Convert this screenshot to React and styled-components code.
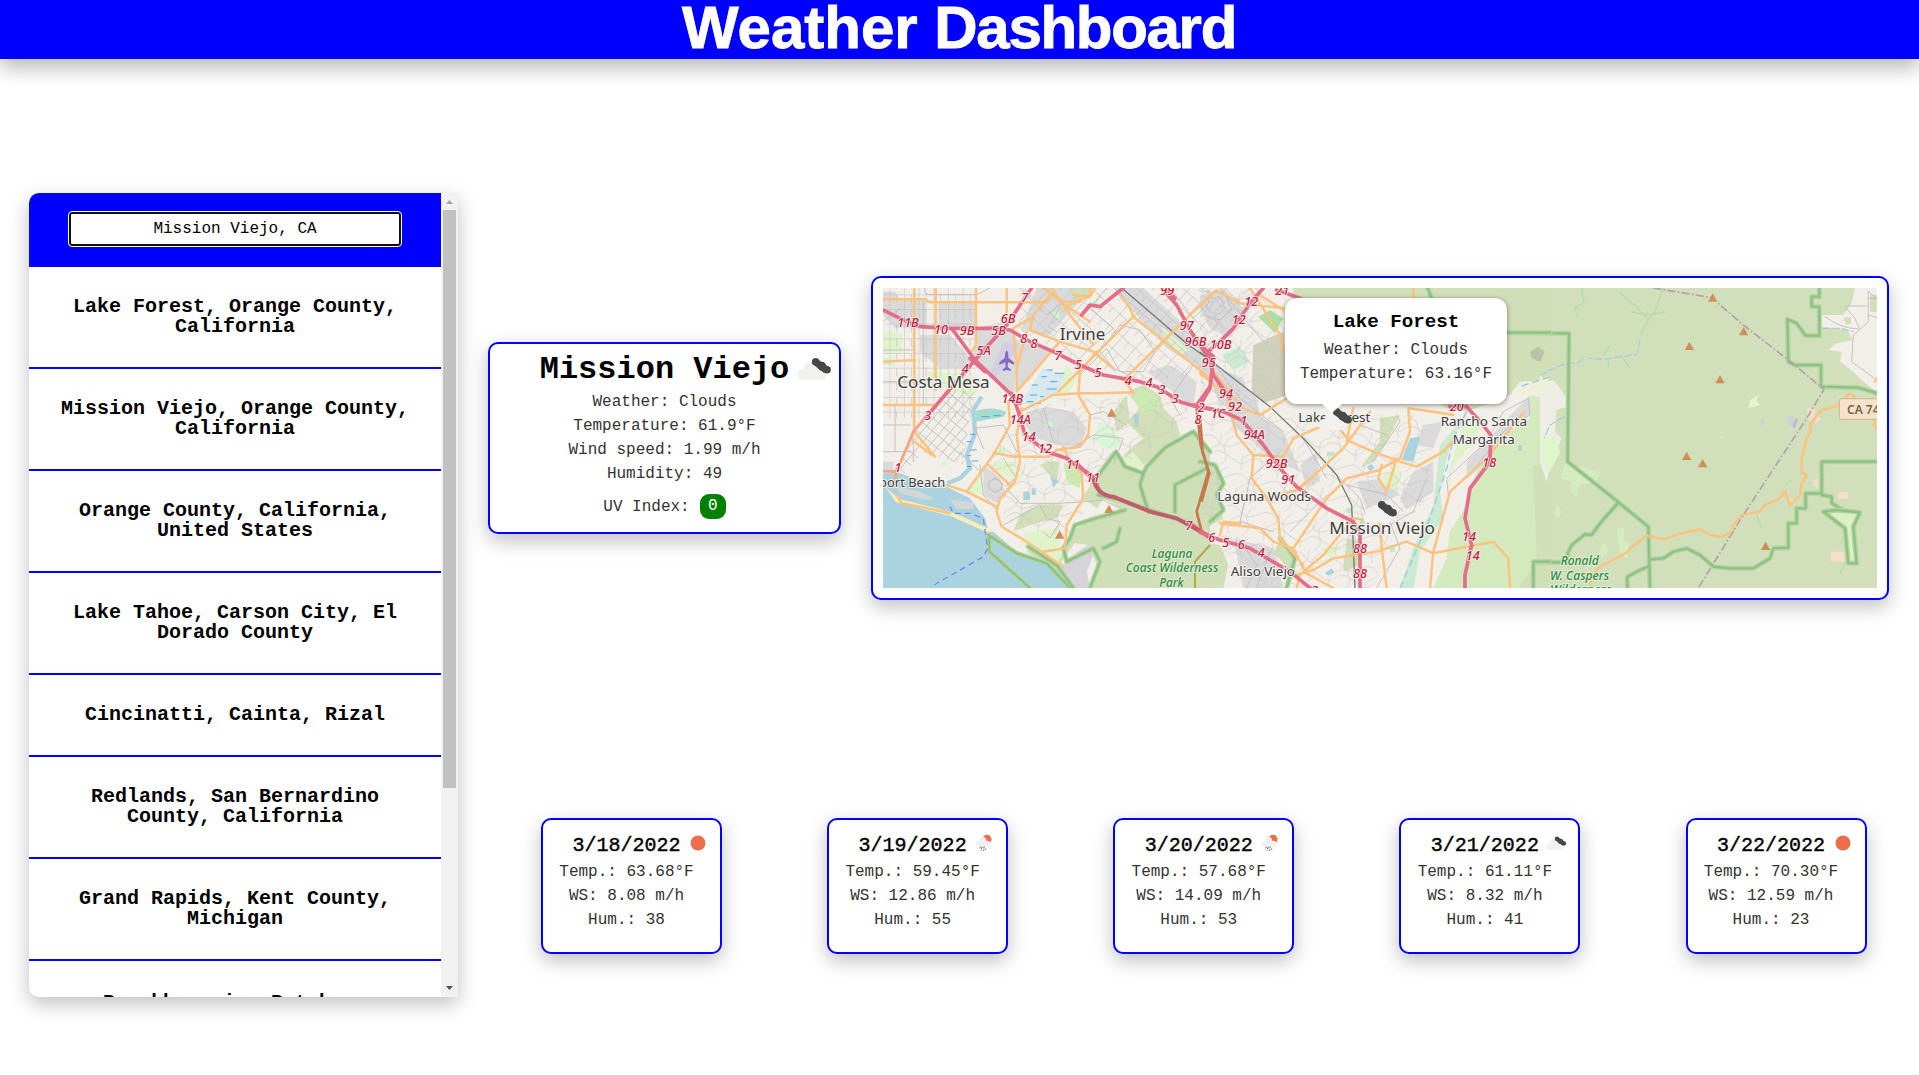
import React from "react";
import styled, { createGlobalStyle } from "styled-components";

const mono = `"Liberation Mono", "Courier New", monospace`;
const cardShadow = "0 7px 20px rgba(0, 0, 0, 0.25)";

const GlobalStyle = createGlobalStyle`
  * { box-sizing: border-box; }
  html, body { margin: 0; padding: 0; background: #fff; overflow: hidden; }
  body { font-family: ${mono}; color: #000; }
`;

const Page = styled.div`
  width: 100vw;
  height: 100vh;
  display: flex;
  flex-direction: column;
  overflow: hidden;
`;

const Header = styled.header`
  height: 59px;
  flex: none;
  background: #00f;
  box-shadow: 0 9px 20px rgba(0, 0, 0, 0.28);
  display: flex;
  justify-content: center;
`;

const Title = styled.h1`
  margin: 0;
  padding-right: 1px;
  font: 700 60px/56px "Liberation Sans", Arial, sans-serif;
  color: #fff;
  -webkit-text-stroke: 0.9px #fff;
  white-space: nowrap;
`;

const TightWord = styled.span`
  letter-spacing: -1.3px;
`;

const Body = styled.main`
  flex: 1;
  display: flex;
  align-items: flex-start;
  gap: 30px;
  padding: 134px 30px 0 29px;
`;

const Sidebar = styled.aside`
  width: 429px;
  height: 804px;
  flex: none;
  display: flex;
  overflow: hidden;
  border-radius: 10px 0 0 10px;
  background: #fff;
  box-shadow: ${cardShadow};
`;

const List = styled.div`
  flex: 1;
  overflow: hidden;
`;

const SearchBar = styled.div`
  height: 74px;
  background: #00f;
  padding: 19px 40px 0 40px;
`;

const SearchInput = styled.input`
  display: block;
  width: 332px;
  height: 34px;
  margin: 0 auto;
  border: 2px solid #101010;
  border-radius: 3px;
  outline: 1px solid #fff;
  background: #fff;
  padding: 0;
  text-align: center;
  font: 400 16px ${mono};
  color: #000;
`;

const City = styled.div`
  padding: 30px 20px;
  border-bottom: 2px solid #00f;
  text-align: center;
  font-size: 20px;
  font-weight: 700;
  line-height: 20px;

  &:last-child {
    padding-top: 32px;
  }
`;

const Scrollbar = styled.div`
  width: 17px;
  background: #f1f1f1;
  display: flex;
  flex-direction: column;
  align-items: center;
`;

const ScrollThumb = styled.div`
  width: 13px;
  height: 578px;
  background: #c1c1c1;
`;

const ScrollArrow = styled.svg`
  width: 17px;
  height: 17px;
  flex: none;
  margin-top: ${(p) => (p.$end ? "auto" : "0")};
`;

const Content = styled.section`
  flex: 1;
  min-width: 0;
  padding-top: 83px;
`;

const TopRow = styled.div`
  display: flex;
  align-items: center;
  gap: 30px;
`;

const Card = styled.article`
  background: #fff;
  border: 2px solid #00f;
  border-radius: 10px;
  box-shadow: ${cardShadow};
`;

const CurrentCard = styled(Card)`
  width: 353px;
  height: 192px;
  flex: none;
`;

const CardTitle = styled.div`
  display: flex;
  justify-content: center;
  align-items: flex-start;
  height: ${(p) => (p.$large ? "46px" : "32px")};
  font-weight: ${(p) => (p.$large ? 700 : 400)};
  -webkit-text-stroke: ${(p) => (p.$large ? "0" : "0.4px #000")};
  font-size: ${(p) => (p.$large ? "32px" : "20px")};
  line-height: ${(p) => (p.$large ? "51px" : "35px")};
`;

const TitleIcon = styled.span`
  display: flex;
  flex: none;
  width: ${(p) => p.$size}px;
  height: ${(p) => p.$size}px;
  margin-right: -${(p) => p.$size + p.$gap}px;
  margin-left: ${(p) => p.$gap}px;
`;

const Line = styled.div`
  font-size: 16px;
  line-height: 24px;
  text-align: center;
  color: #333;
  white-space: nowrap;
`;

const UvLine = styled(Line)`
  display: flex;
  align-items: center;
  justify-content: center;
  gap: 10px;
  margin-top: 8px;
`;

const UvBadge = styled.span`
  width: 26px;
  height: 25px;
  border-radius: 9px;
  background: green;
  color: #fff;
  line-height: 24px;
`;

const MapCard = styled(Card)`
  width: 1018px;
  height: 324px;
  padding: 10px;
  flex: none;
`;

const MapView = styled.div`
  position: relative;
  width: 994px;
  height: 300px;
  overflow: hidden;
`;

const MapCanvas = styled.svg`
  display: block;
  width: 994px;
  height: 300px;
`;

const Marker = styled.div`
  position: absolute;
  display: flex;
  width: 50px;
  height: 50px;
  left: ${(p) => p.$x}px;
  top: ${(p) => p.$y}px;
`;

const Popup = styled.div`
  position: absolute;
  left: 402px;
  top: 10px;
  width: 222px;
  height: 106px;
  padding-top: 12px;
  border-radius: 12px;
  background: #fff;
  box-shadow: 0 1px 5px rgba(0, 0, 0, 0.45);

  &::after {
    content: "";
    position: absolute;
    left: 36px;
    top: 105px;
    border: solid transparent;
    border-width: 10px 11px 0;
    border-top-color: #fff;
  }
`;

const PopupTitle = styled.div`
  font-size: 19.2px;
  font-weight: 700;
  line-height: 24px;
  margin-bottom: 4px;
  text-align: center;
`;

const ForecastRow = styled.div`
  display: flex;
  justify-content: space-between;
  margin-top: 218px;
  padding: 0 22.5px 0 53px;
`;

const DayCard = styled(Card)`
  width: 181px;
  height: 136px;
  padding: 8px 10px 0 0;
`;

/* Weather icons share one 90-unit square. */
const IconSvg = styled.svg`
  width: 100%;
  height: 100%;
`;

function WeatherIcon({ kind }) {
  return (
    <IconSvg viewBox="0 0 90 90">
      {kind === "sun" && <circle cx="45" cy="45" r="22.5" fill="#ec6e4c" />}
      {kind === "rain" && (
        <>
          <circle cx="54" cy="34" r="13.5" fill="#ec6e4c" />
          <g fill="#f1f1f1">
            <circle cx="30" cy="46" r="9.5" />
            <circle cx="41" cy="38" r="11" />
            <circle cx="55" cy="47" r="9" />
            <rect x="29" y="42" width="27" height="13.500" />
          </g>
          <g stroke="#484848" strokeWidth="2.6" strokeLinecap="round">
            <path d="M34 57l-2 3M40 57l-3 5M46 57l-2 3M37 66l-1 1M45 65l-2 3M50 62l-1 2" />
          </g>
        </>
      )}
      {kind === "clouds" && (
        <>
          <g fill="#f1f1f0">
            <circle cx="25" cy="55" r="10" />
            <circle cx="39" cy="45" r="13" />
            <circle cx="50" cy="49" r="10" />
            <circle cx="58" cy="56" r="9" />
            <rect x="24" y="50" width="35" height="15" />
          </g>
          <g fill="#484848">
            <circle cx="48" cy="32" r="6.800" />
            <circle cx="59" cy="40" r="8" />
            <circle cx="68.500" cy="46.500" r="6.800" />
            <path d="M43 36.500L63 52L71 41L51 27Z" />
          </g>
        </>
      )}
    </IconSvg>
  );
}

const ROAD = {
  street: ["#bcbbbd", 2.6],
  minor: ["#c8c6c6", 1.8],
  rail: ["#777", 4],
  main: ["#fbc37f", 7.5],
  coast: ["#f9a27e", 8],
  motorway: ["#e46d87", 11],
  park: ["#8fc186", 7],
  parkGlow: ["#b4d5a0", 15],
  stream: ["#a5cfe0", 4],
};

function Roads({ kind, d, dash }) {
  const [stroke, strokeWidth] = ROAD[kind];
  return (
    <path
      d={d}
      fill="none"
      stroke={stroke}
      strokeWidth={strokeWidth}
      strokeLinejoin="round"
      strokeLinecap={dash ? "butt" : "round"}
      strokeDasharray={dash}
    />
  );
}

function ParkEdge({ d }) {
  return (
    <>
      <Roads kind="parkGlow" d={d} />
      <Roads kind="park" d={d} />
    </>
  );
}

function Exit({ items }) {
  return items.map(([t, x, y], i) => (
    <text
      key={i}
      x={x}
      y={y + 13}
      textAnchor="middle"
      fontSize="38"
      fontStyle="italic"
      fontWeight="500"
      fill="#b3243c"
      stroke="#f7ecec"
      strokeWidth="5"
      strokeLinejoin="round"
      paintOrder="stroke"
    >
      {t}
    </text>
  ));
}

function Place({ x, y, w, size, green, children }) {
  return (
    <text
      x={x}
      y={y}
      textLength={w}
      lengthAdjust="spacingAndGlyphs"
      fontSize={size}
      fontStyle={green ? "italic" : "normal"}
      fontWeight={green ? 500 : 400}
      fill={green ? "#2f8a3f" : "#3c3c3c"}
      stroke={green ? "#e0ecd2" : "#f5f3ef"}
      strokeWidth="6"
      strokeLinejoin="round"
      paintOrder="stroke"
    >
      {children}
    </text>
  );
}

function Peaks({ at }) {
  return at.map(([x, y], i) => (
    <path key={i} d={`M${x} ${y - 13}L${x + 14} ${y + 12}H${x - 14}Z`} fill="#d08f55" />
  ));
}

const West = "scale(.333333) translate(-69 -69)";
const Middle = "scale(.333333) translate(951 -69)";
const East = "scale(.333333) translate(1971 -69)";

const plane = "M440 256q6 6 5 22l17 14v7l-18-7-1 14 9 7v5l-12-3-12 3v-5l9-7-1-14-18 7v-7l17-14q-1-16 5-22Z";

function CountyMap() {
  return (
    <MapCanvas viewBox="0 0 994 300" fontFamily='"Noto Sans", "Open Sans", sans-serif'>
      <defs>
        <pattern id="grid" width="44" height="44" patternUnits="userSpaceOnUse">
          <path d="M0 1H44M1 0V44M22 0V26" stroke="#bdbcbe" strokeWidth="2.2" fill="none" />
        </pattern>
        <pattern id="mesa" width="22" height="30" patternUnits="userSpaceOnUse" patternTransform="rotate(40)">
          <path d="M0 1H22M1 0V30" stroke="#bdbcbe" strokeWidth="2.4" fill="none" />
        </pattern>
        <pattern id="slant" width="52" height="46" patternUnits="userSpaceOnUse" patternTransform="rotate(42)">
          <path d="M0 1H52M1 0V46M26 0V22" stroke="#bfbec0" strokeWidth="2.4" fill="none" />
        </pattern>
        <pattern id="curvy" width="110" height="96" patternUnits="userSpaceOnUse" patternTransform="rotate(12)">
          <path
            d="M0 22Q30 0 52 25T110 22M30 96Q14 60 40 48T58 0M70 96Q98 74 80 52T96 0M0 70Q28 88 44 64T110 70"
            stroke="#c4c2c3"
            strokeWidth="2.4"
            fill="none"
          />
        </pattern>
      </defs>
      <rect width="994" height="300" fill="#f2efe9" />

      {/* land cover, west */}
      <g transform={West}>
        <g fill="#dadadb">
          <path d="M69 80H105L120 105H200V180L180 190H105L69 150Z" />
          <path d="M235 115H350V185H235ZM180 210H270L330 280V310H240L180 260Z" />
          <path d="M350 190L430 170L480 240L460 385L340 295Z" />
          <path d="M530 69H700L640 130L560 220L485 190Z" />
          <path d="M760 69H850L1050 250V330L920 250L830 150Z" />
          <path d="M500 440L560 425L640 440L680 490L660 545L590 540L520 515L490 470Z" />
          <path d="M460 220L570 260L510 345L470 375Z" />
          <path d="M860 320L930 300L1010 350L1000 430L900 350Z" />
          <path d="M370 600L420 640L440 690L410 715L370 690ZM69 590H100V625H69Z" />
        </g>
        <g fill="#d2dfb8">
          <path d="M800 380L850 360L900 390L910 430L950 470L960 510L900 570L830 610L790 570L850 520L800 470L840 430Z" />
          <path d="M480 750Q530 710 610 720L590 760L510 780L460 800ZM700 640L740 690L710 730L670 700Z" />
          <path d="M630 69H690V100L640 110ZM760 440L800 390L810 470L770 500ZM560 590H600L590 650L540 600Z" />
        </g>
        <g fill="#e0f3ca">
          <path d="M69 195L125 205V265H69ZM200 320L300 325L370 350L340 390L280 385L210 345Z" />
          <path d="M620 300L650 340L625 390L580 380ZM360 620L375 690L325 680ZM400 590L470 590L460 640L410 620Z" />
          <path d="M820 560L850 600L830 620L780 590ZM500 800L590 790L610 900L560 890L480 830ZM900 180L985 255L960 270L910 210Z" />
          <path d="M840 370L890 390L900 430L850 450L820 400Z" fill="#cdebb0" />
          <path d="M610 590L665 620L660 670L620 650Z" fill="#cdebb0" />
        </g>
        <g fill="#c8facc">
          <path d="M70 280h30v20h-30ZM245 590h14v14h-14ZM420 550h16v18h-16ZM580 140h18v18h-18ZM560 470h18v14h-18ZM110 210l8 12-8 10ZM690 110h24v12h-24Z" />
          <path d="M720 470Q760 480 780 520T730 545L700 520Z" opacity=".65" />
        </g>
        <path d="M430 230L475 235L465 265L400 345L385 335Z" fill="#d4cfe0" />
        <rect x="69" y="69" width="280" height="390" fill="url(#grid)" opacity=".8" />
        <path d="M170 480L250 375L350 380L330 450L310 600L190 560L120 640L100 620Z" fill="url(#mesa)" />
        <path d="M480 69H1050V330L850 345L690 300L560 240L470 190Z" fill="url(#slant)" opacity=".8" />
        <path d="M490 400H1000L960 510L700 640L640 840L440 780L390 600Z" fill="url(#curvy)" opacity=".75" />
        <path d="M69 625L110 622L180 645L250 660L330 700L375 760L395 830H360L69 715Z" fill="#aad3df" />
        <path d="M365 395L340 435L345 505L320 570L330 610L300 640L262 655" fill="none" stroke="#aad3df" strokeWidth="13" />
        <path d="M340 440Q400 420 440 442L430 455L345 470Z" fill="#a6dccf" />
        <path d="M110 665L180 680L220 700L200 705L120 685ZM272 705L340 712V732H290Z" fill="#d7d6d6" />
        <path d="M550 310L615 330L590 390L540 400L510 420L490 400L520 355Z" fill="#d7e8ee" />
        <path d="M570 630L595 650L580 668ZM490 680h20v25h-20ZM820 450h15v35h-10ZM515 670h12v20h-12Z" fill="#aad3df" />
        <path d="M69 665L105 708L270 745L385 800L400 800L470 860L600 910L660 969H69Z" fill="#aad3df" />
        <path d="M75 665L108 712L270 752L385 803L400 797L330 765L270 740L118 702Z" fill="#fbeebc" />
        <path
          d="M708 640L768 560L795 605L850 625L915 548L1000 500L1050 560V969H690L710 900L690 840L645 835L610 880L590 915L500 860L510 845L590 900L640 800L680 765L790 735L715 690Z"
          fill="#cfdfb8"
        />
        <path d="M640 870L690 835L700 870L680 920L690 969H650L595 915Z" fill="#d6d4d8" />
        <path
          d="M365 455h25M400 452h22M330 508h16M320 530h14M330 555h20M322 572h12M335 588h20M320 605h15M560 315h18M585 325h28M545 335h15M570 350h22M515 360h18M560 372h30M510 390h22M540 395h12M500 410h20M525 415h18"
          stroke="#4fa5ec"
          strokeWidth="3"
        />
        <path d={plane} fill="#8569c6" />
      </g>

      {/* land cover, middle */}
      <g transform={Middle}>
        <g fill="#dadadb">
          <path d="M0 90L70 75L130 130L90 220L30 190L0 130ZM0 270L90 330L170 400L180 450L60 420Z" />
          <path d="M30 300L130 340L160 440L250 500L300 620L200 570L100 480Z" />
          <path d="M640 620L700 590V680L620 735L600 700ZM670 480L730 470L700 550L650 540ZM800 590L990 390V450L920 500L850 600L800 640Z" />
          <path d="M100 820L220 850L250 969H130ZM470 650L560 640L600 690L500 730ZM300 600L350 560L360 650L320 670Z" />
        </g>
        <g fill="#d1dfb9">
          <path d="M160 240L250 200L260 330L290 380L190 415L155 380Z" fill="#d0d1bc" />
          <path d="M280 69H1050V345L960 350L930 390L880 410L800 440L740 430L700 400H260Z" />
          <path d="M990 360H1050V969H700L740 880L750 800L800 720L830 620L870 570L930 500L990 460Z" fill="#d5e9bf" />
          <path d="M1000 600H1050V969H960L1010 880Z" />
          <path d="M0 590L40 600L75 660L50 700L70 760L0 800ZM0 830L60 840L85 900L70 969H0Z" />
          <path d="M540 460L600 450L560 530L520 590L480 610L540 530ZM240 830L280 880L270 920L220 860ZM440 820L490 830L480 900L430 920Z" />
        </g>
        <g fill="#bce8c8">
          <path d="M175 155L210 135L250 160L225 205Z" fill="#a9e0a6" />
          <path d="M720 540L780 470L740 580L720 680L730 760L660 860L640 969H600L640 850L700 720Z" opacity=".75" />
          <path d="M65 270L120 245L150 290L100 315Z" opacity=".75" />
          <path d="M480 760h18v18h-18ZM440 730h16v14h-16ZM570 840h14v20h-14ZM380 560h24v14h-24Z" />
        </g>
        <path d="M790 470L850 450L830 520L760 600L740 700L750 610ZM550 630L600 600L590 680L540 650ZM360 850L420 840L390 880Z" fill="#dff2c9" />
        <path d="M940 380L1050 330V400L970 390Z" fill="#edf0da" />
        <path d="M0 69H190L250 190L250 450L640 450L700 560L680 700L560 850L520 969H130L0 760Z" fill="url(#curvy)" opacity=".7" />
        <path d="M0 69H180L120 200H0ZM0 300L100 350L180 440L60 430Z" fill="url(#slant)" opacity=".7" />
        <path d="M630 520L660 515L640 590L605 585ZM500 605l15-8 8 10-12 12ZM375 925l20-15 8 12-18 10ZM955 540h10v18h-10Z" fill="#aad3df" />
        <path d="M990 260L1015 245L1035 260L1020 290L995 280Z" fill="#bcc0a6" />
      </g>

      {/* land cover, east */}
      <g transform={East}>
        <rect x="25" y="69" width="990" height="900" fill="#d2dfbb" />
        <path d="M20 355L40 345L60 370L80 400V425L50 435L45 500L65 520L30 600L20 650L0 590V330Z" fill="#efeee6" />
        <path d="M5 520L45 510L60 560L30 620L10 600Z" fill="#dff5ca" />
        <path d="M0 340L35 350L30 380H0Z" fill="#edf0da" />
        <path
          d="M945 69L1011 69V385L960 340L940 320L900 290L905 260L865 255L890 235L940 225L920 195L845 185V150L910 150L935 115Z"
          fill="#f2efe9"
        />
        <path d="M990 90h20v50h-20ZM910 160l20-5 5 20-15 5Z" fill="#cfdfb6" />
        <path
          d="M80 580L100 600L180 620L170 650L120 660L110 695L90 680L95 650L60 640ZM50 715L65 740L55 760L40 750ZM230 790h25l-5 30 20 20-10 40-20-10ZM180 850l15-20 10 30-20 20Z"
          fill="#d5ecc0"
        />
        <path d="M630 405l25-15-5 15 10 15-35 10ZM540 515h12l-5 6Z" fill="#def6c8" />
        <path d="M660 465l18-5-10 25ZM740 460l20-10v35l-15-5Z" fill="#cfced5" />
        <path d="M765 462l8 0-8 26h-8Z" fill="#b9b4d8" />
        <path d="M800 430h25v20l20 10-15 10-25-5ZM820 645l18-5-5 30-15-10ZM895 682h28v20h-28ZM873 860h40v30h-40Z" fill="#f6dfca" />
        <path d="M850 740L960 740L940 790L945 895H925L910 790Z" fill="#ddefc8" />
        <path
          d="M125 69L132 110L105 130L112 155M240 85L290 125L325 165L345 140L370 69M325 165L300 210M270 140L325 150L380 140M190 275L210 240M205 280V305M250 280L270 310M650 750L665 790M920 885L900 925M735 660L755 645"
          fill="none"
          stroke="#b5dab0"
          strokeWidth="4"
        />
        <Roads kind="stream" d="M300 225L292 268L240 275L190 283L145 280M130 280L115 292L70 298L0 330" dash="24 6" />
        <Roads kind="stream" d="M845 190H900L940 200M75 455L30 480L12 520" dash="24 6" />
        <Roads kind="street" d="M985 80V170L958 195L940 210L935 290L1010 345M915 125L945 160L958 190M855 155Q900 190 955 192M985 100H1010M985 150L1010 158M920 123H980M985 80L1010 100" />
        <ParkEdge d="M0 205H87L83 590L233 710L325 785L330 969M233 715L180 775L155 810L135 808L95 840L83 865V892H0M335 883L370 880L400 860L440 850L480 870L520 905L570 910L640 910L690 880L700 850L745 848V775H770V730H797V685H845V590H1011M845 690L875 695V715L910 735M838 69V95H815V125H838V212H797L770 175L742 162L745 290L765 300H843V365L955 368L1011 385M325 905L300 915L262 935V969" />
        <ParkEdge d="M850 740L890 735L960 742L940 785L950 895H925L915 790Z" />
        <Roads kind="main" d="M150 969Q155 910 200 895L265 860L270 850L320 812L370 823L415 808L480 793L510 810L545 815L580 798V780L605 750L660 740L675 720L720 700L735 678L750 722L780 690L785 655L800 630L785 625L785 580L800 520L810 500L812 475L845 435L895 422M918 398Q925 378 942 395M1011 340L1005 350M1003 460L1003 480L1011 492" />
        <path d="M340 69L515 98L610 180L745 285L852 373L800 460L610 750L475 969" fill="none" stroke="#b49fae" strokeWidth="5" strokeDasharray="24 7 5 7" />
        <rect x="898" y="401" width="150" height="62" rx="7" fill="#f5e2ce" stroke="#dcb998" strokeWidth="4" />
        <text x="921" y="447" fontSize="36" fontWeight="600" fill="#7d6238">CA 74</text>
        <Peaks at={[[518, 98], [611, 199], [448, 243], [540, 343], [440, 573], [488, 595], [677, 843]]} />
        <Place x={62} y={900} w={114} size={37} green>Ronald</Place>
        <Place x={30} y={944} w={177} size={37} green>W. Caspers</Place>
        <Place x={30} y={988} w={185} size={37} green>Wilderness</Place>
      </g>

      {/* roads, west */}
      <g transform={West}>
        <Roads kind="street" d="M195 69V85L210 89H350L390 69M69 255H160V120M190 110V420M69 170L120 130M69 560H150M69 350H160M160 350V590M105 420V560M69 480H150M470 60L560 150L610 110L565 185L590 200M740 69L690 130L760 190L690 250M660 330L740 250L780 320L850 320L885 260L840 195L780 180L720 260L760 310L830 340M850 130L780 190M900 180L1000 240M930 69L1000 160L1050 110M300 560L360 620M440 670L480 715H600L680 710L730 705L790 735M430 580L470 640L440 660M360 600L370 690L410 735M430 780L540 720L560 760L600 770L570 820L550 800M640 550L700 510L790 520L760 600M690 450L730 440L800 480M550 430L580 530M370 550L345 490L430 480L470 560M1000 300L930 400L960 450" />
        <path d="M387 650l18-10 20 12v20l-20 10-18-12Z" fill="none" stroke="#bbb" strokeWidth="3" />
        <Roads kind="rail" d="M550 69L580 90M785 69L985 240L1050 285" />
        <ParkEdge d="M708 640L768 560L795 605L850 625L860 605L915 548L1000 500L1050 560M850 625L840 660L865 740M715 690L780 705L900 745L990 775M795 735L690 765L645 780L630 820L610 850L620 890L700 850L720 890L690 969M945 740V660L1040 610M780 790L770 830L730 850M385 810L470 865L560 895L630 969M388 810V860L510 969M505 845L590 900L640 969" />
        <Roads
          kind="main"
          d="M163 69V500L225 575M227 69V375M348 69V240L335 260M69 103H195L210 112H440V69M69 290L165 285M69 420H220M235 112H560L570 90M440 112V150M550 69L615 120L690 170M570 90L520 150L510 195L600 230L700 260L760 310M820 155L595 380M820 155L1050 340M1050 92L790 345L820 382L720 385H660L580 390L480 440M780 90L810 130L820 155M710 260L660 320L655 390L690 450L685 510L660 545L590 555L570 575H460L400 563M445 410L450 480L400 570L320 680M485 430L470 510L480 590L465 650L420 700L410 740L425 785L500 830L550 865L610 905M150 520L215 570M260 660L320 680L410 725M385 600L450 660M610 545L630 590L665 625L670 700L620 780L615 850L550 860M500 200L470 310V380L595 235M470 300L460 190L510 160M640 90L690 95L705 69M660 110H600M690 69V90L620 125M575 69L630 150L700 240"
        />
        <Roads kind="main" d="M110 690L125 715L180 725L270 745" />
        <Roads kind="coast" d="M69 618L110 620L160 500L195 460M105 655L110 610" />
        <Roads kind="motorway" d="M69 135L120 160L180 185L270 190H410L450 195L510 230L580 260L660 300L730 330L840 350L890 365L960 410L1010 425L1050 432M195 460L345 285L440 180L515 69M275 190L345 285L460 395L475 440L495 510L560 560L620 580L700 635L720 680M790 69L720 125L690 120L665 150M905 69L950 120L990 195L1040 270M1010 420L1050 365" />
        <Roads kind="motorway" d="M920 75L945 100M330 280L375 320M455 385L480 415M1000 420L1025 420M650 595L690 635M985 770L1050 820" />
        <path d="M700 640Q710 690 760 695L870 740L950 760L1050 815" fill="none" stroke="#c55a6c" strokeWidth="12" />
        <path d="M1010 430L1022 540L1045 620L1010 740L1025 800" fill="none" stroke="#c8784f" strokeWidth="8" />
        <path d="M1005 969V890L1050 840" fill="none" stroke="#b6a548" strokeWidth="6" />
        <path d="M222 960L370 875L383 850L370 760L330 745H280L270 725" fill="none" stroke="#7788ea" strokeWidth="4" strokeDasharray="18 12" />
        <Peaks at={[[755, 443], [747, 732], [599, 809]]} />
      </g>

      {/* roads, middle */}
      <g transform={Middle}>
        <Roads kind="street" d="M60 69L140 170L200 240M45 300L120 400L250 500M240 560L150 640L120 770L220 800M520 590L600 470L590 450M680 640L640 740L570 780M400 620L480 700L500 760M270 800L380 690M440 660L560 690L610 740M745 690L740 640L860 530L910 440L985 400L990 450L920 490L800 640M130 840L170 900L140 969M170 969L210 860M310 520L380 640M530 969L600 850L570 770M480 480L560 510" />
        <Roads kind="street" d="M30 100L60 95L75 130L45 155L20 130ZM18 80L75 85L95 135L60 165L10 150" />
        <Roads kind="rail" d="M0 262L210 425L320 530L410 630L455 720L465 969" />
        <path d="M1050 335L960 365M800 440L760 520L740 610L690 760L600 969" stroke="#a5cde0" strokeWidth="5" fill="none" strokeDasharray="22 12" />
        <ParkEdge d="M683 69L695 100M920 203H1050M0 590L45 600L70 655L50 690L70 735L30 770M240 820L285 880L260 969M1050 890H1000V969" />
        <Roads
          kind="main"
          d="M0 125L50 75L120 115L250 130M150 69L240 210L250 260M640 69V100M180 90L250 135M40 320L130 430L180 450L260 400M0 325L80 390L110 510L160 570L250 575L280 520L400 470M400 470L450 530L520 560L600 590L650 605L730 560L765 520M545 610L600 580L630 500L625 430L700 440L760 450M300 670L430 550L510 440M200 700L290 675L330 640M545 600L535 640L560 680L590 580M540 615L440 640L380 700L280 850L310 910M290 930L340 915L400 880L530 860L620 830L700 865L800 845L880 830L925 880L930 969M160 570L155 640L200 700L235 760L240 820L310 900M60 775L180 790L220 830L280 850M400 969L310 920L370 870L460 760L540 770M540 770L545 850L560 969M860 580L750 680L700 860L690 969M860 580L970 445M60 810L70 770L120 775M300 930L290 969M460 430L440 530"
        />
        <Roads kind="motorway" d="M190 69L150 115L100 190L60 230L25 260L40 330L90 400M0 240L40 275L30 370L0 420M0 425L70 440L125 465L190 540L240 610L290 665L380 730L460 770L480 810L480 969M230 75L300 100M750 425H800L845 475L872 510L870 590L810 670L795 760L815 840L795 930V969M0 802L60 825L150 850L210 885L270 920L330 969" />
        <path d="M0 455L8 560L28 625L5 710" fill="none" stroke="#c8784f" strokeWidth="8" />
      </g>

      {/* labels */}
      <g transform={West}>
        <Place x={599} y={225} w={137} size={48}>Irvine</Place>
        <Place x={112} y={370} w={277} size={48}>Costa Mesa</Place>
        <Place x={-24} y={666} w={280} size={38}>Newport Beach</Place>
        <Place x={875} y={878} w={122} size={37} green>Laguna</Place>
        <Place x={797} y={922} w={278} size={37} green>Coast Wilderness</Place>
        <Place x={898} y={965} w={73} size={37} green>Park</Place>
        <Exit
          items={[
            ["11B", 144, 173], ["10", 243, 194], ["9B", 321, 196], ["5B", 416, 197], ["6B", 444, 161], ["7", 494, 99],
            ["8", 491, 221], ["8", 522, 237], ["7", 595, 273], ["5", 655, 300], ["5", 714, 323], ["4", 805, 346], ["4", 867, 353],
            ["3", 906, 375], ["3", 946, 401], ["2", 1024, 427], ["8", 1014, 465], ["5A", 371, 256], ["4", 316, 310], ["3", 203, 451],
            ["1", 114, 608], ["14B", 457, 402], ["14A", 481, 463], ["14", 506, 514], ["12", 555, 552], ["11", 639, 598],
            ["11", 699, 637], ["7", 987, 782], ["99", 922, 76], ["97", 980, 182], ["96B", 1007, 231],
          ]}
        />
      </g>
      <g transform={Middle}>
        <Place x={295} y={471} w={216} size={37}>Lake Forest</Place>
        <Place x={722} y={484} w={259} size={38}>Rancho Santa</Place>
        <Place x={758} y={537} w={186} size={38}>Margarita</Place>
        <Place x={52} y={708} w={281} size={38}>Laguna Woods</Place>
        <Place x={388} y={808} w={317} size={47}>Mission Viejo</Place>
        <Place x={92} y={934} w={193} size={37}>Aliso Viejo</Place>
        <Exit
          items={[
            ["12", 154, 110], ["12", 116, 165], ["10B", 62, 239], ["95", 26, 294], ["94", 78, 386], ["92", 105, 426],
            ["2", 4, 429], ["1C", 54, 445], ["1", 131, 468], ["94A", 163, 509], ["92B", 230, 595], ["91", 265, 645],
            ["6", 35, 817], ["5", 77, 832], ["6", 124, 839], ["4", 184, 862], ["88", 480, 852], ["88", 480, 927],
            ["20", 770, 424], ["18", 868, 593], ["14", 807, 814], ["14", 818, 872], ["21", 247, 76], ["3", 344, 976],
          ]}
        />
      </g>
    </MapCanvas>
  );
}

const cities = [
  "Lake Forest, Orange County, California",
  "Mission Viejo, Orange County, California",
  "Orange County, California, United States",
  "Lake Tahoe, Carson City, El Dorado County",
  "Cincinatti, Cainta, Rizal",
  "Redlands, San Bernardino County, California",
  "Grand Rapids, Kent County, Michigan",
  "Brookhavenin, Patchog, Washington",
];

const forecast = [
  { date: "3/18/2022", icon: "sun", temp: "63.68", wind: "8.08", hum: 38 },
  { date: "3/19/2022", icon: "rain", temp: "59.45", wind: "12.86", hum: 55 },
  { date: "3/20/2022", icon: "rain", temp: "57.68", wind: "14.09", hum: 53 },
  { date: "3/21/2022", icon: "clouds", temp: "61.11", wind: "8.32", hum: 41 },
  { date: "3/22/2022", icon: "sun", temp: "70.30", wind: "12.59", hum: 23 },
];

export default function App() {
  return (
    <Page>
      <GlobalStyle />
      <Header>
        <Title>
          Weather <TightWord>Dashboard</TightWord>
        </Title>
      </Header>
      <Body>
        <Sidebar>
          <List>
            <SearchBar>
              <SearchInput defaultValue="Mission Viejo, CA" />
            </SearchBar>
            {cities.map((c) => (
              <City key={c}>{c}</City>
            ))}
          </List>
          <Scrollbar>
            <ScrollArrow viewBox="0 0 17 17">
              <path d="M5 11h7L8.500 7Z" fill="#a3a3a3" />
            </ScrollArrow>
            <ScrollThumb />
            <ScrollArrow $end viewBox="0 0 17 17">
              <path d="M5 6h7L8.500 10Z" fill="#505050" />
            </ScrollArrow>
          </Scrollbar>
        </Sidebar>
        <Content>
          <TopRow>
            <CurrentCard>
              <CardTitle $large>
                Mission Viejo
                <TitleIcon $size={50} $gap={0}>
                  <WeatherIcon kind="clouds" />
                </TitleIcon>
              </CardTitle>
              <Line>Weather: Clouds</Line>
              <Line>Temperature: 61.9°F</Line>
              <Line>Wind speed: 1.99 m/h</Line>
              <Line>Humidity: 49</Line>
              <UvLine>
                UV Index: <UvBadge>0</UvBadge>
              </UvLine>
            </CurrentCard>
            <MapCard>
              <MapView>
                <CountyMap />
                <Marker $x={427.3} $y={106.3}>
                  <WeatherIcon kind="clouds" />
                </Marker>
                <Marker $x={472.3} $y={198.7}>
                  <WeatherIcon kind="clouds" />
                </Marker>
                <Popup>
                  <PopupTitle>Lake Forest</PopupTitle>
                  <Line>Weather: Clouds</Line>
                  <Line>Temperature: 63.16°F</Line>
                </Popup>
              </MapView>
            </MapCard>
          </TopRow>
          <ForecastRow>
            {forecast.map((f) => (
              <DayCard key={f.date}>
                <CardTitle>
                  {f.date}
                  <TitleIcon $size={30} $gap={2.6}>
                    <WeatherIcon kind={f.icon} />
                  </TitleIcon>
                </CardTitle>
                <Line>Temp.: {f.temp}°F</Line>
                <Line>WS: {f.wind} m/h</Line>
                <Line>Hum.: {f.hum}</Line>
              </DayCard>
            ))}
          </ForecastRow>
        </Content>
      </Body>
    </Page>
  );
}
